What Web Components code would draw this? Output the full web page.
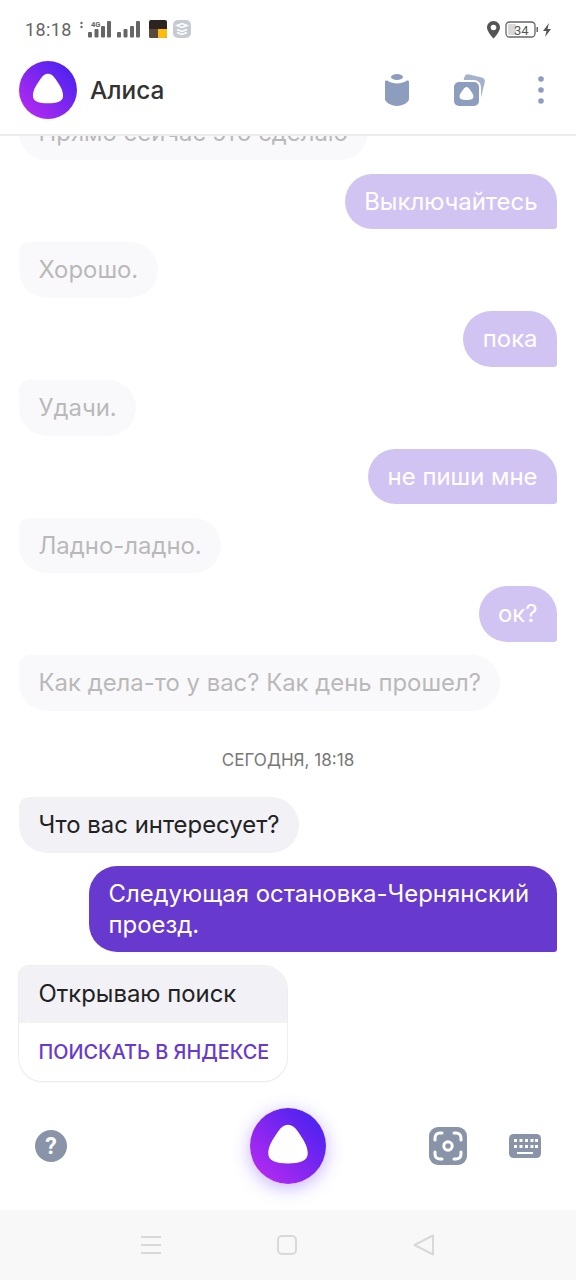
<!DOCTYPE html>
<html lang="ru">
<head>
<meta charset="utf-8">
<style>
  html, body { margin: 0; height: 100%; background: #fff; }
  body { font-family: Inter, "Noto Sans", sans-serif; }
</style>
</head>
<body>
<alice-app>
  <status-bar slot="status"></status-bar>
  <app-header slot="header" title="Алиса"></app-header>
  <chat-list slot="chat">
    <chat-bubble who="alice" faded>Прямо сейчас это сделаю</chat-bubble>
    <chat-bubble who="user" faded>Выключайтесь</chat-bubble>
    <chat-bubble who="alice" faded>Хорошо.</chat-bubble>
    <chat-bubble who="user" faded>пока</chat-bubble>
    <chat-bubble who="alice" faded>Удачи.</chat-bubble>
    <chat-bubble who="user" faded>не пиши мне</chat-bubble>
    <chat-bubble who="alice" faded>Ладно-ладно.</chat-bubble>
    <chat-bubble who="user" faded>ок?</chat-bubble>
    <chat-bubble who="alice" faded>Как дела-то у вас? Как день прошел?</chat-bubble>
    <chat-date>СЕГОДНЯ, 18:18</chat-date>
    <chat-bubble who="alice">Что вас интересует?</chat-bubble>
    <chat-bubble who="user">Следующая остановка-Чернянский проезд.</chat-bubble>
    <search-card action="ПОИСКАТЬ В ЯНДЕКСЕ">Открываю поиск</search-card>
  </chat-list>
  <bottom-bar slot="bottom"></bottom-bar>
  <nav-bar slot="nav"></nav-bar>
</alice-app>

<script>
// the white blob inside the purple circle, drawn in a 100x100 box
const BLOB = "M50 22C55 22 59 25 63 31C69 40 76 49 76 60C76 70 65 73 50 73C35 73 24 70 24 60C24 49 31 40 37 31C41 25 45 22 50 22Z";

function logo(size, id) {
  return `<svg width="${size}" height="${size}" viewBox="0 0 100 100">
    <defs><linearGradient id="${id}" x1="0.1" y1="0.9" x2="0.9" y2="0.1">
      <stop offset="0" stop-color="#b42af0"/><stop offset="1" stop-color="#4a22f0"/>
    </linearGradient></defs>
    <circle cx="50" cy="50" r="50" fill="url(#${id})"/>
    <path d="${BLOB}" fill="#fff"/>
  </svg>`;
}

class AliceApp extends HTMLElement {
  constructor() {
    super();
    this.attachShadow({ mode: "open" }).innerHTML = `
      <style>
        :host { display: flex; flex-direction: column; height: 1280px; width: 576px; overflow: hidden; background: #fff; }
        .chat { flex: 1; min-height: 0; display: flex; flex-direction: column; }
      </style>
      <slot name="status"></slot>
      <slot name="header"></slot>
      <div class="chat"><slot name="chat"></slot></div>
      <slot name="bottom"></slot>
      <slot name="nav"></slot>
    `;
  }
}

class StatusBar extends HTMLElement {
  constructor() {
    super();
    this.attachShadow({ mode: "open" }).innerHTML = `
      <style>
        :host { display: flex; align-items: center; height: 45px; padding: 14px 24px 0 25px; box-sizing: border-box; justify-content: space-between; color: #666; font: 18px Roboto, sans-serif; }
        .side { display: flex; align-items: center; }
        .time { margin-right: 7px; letter-spacing: .4px; }
        svg { display: block; }
      </style>
      <div class="side">
        <span class="time">18:18</span>
        <svg width="114" height="20" viewBox="0 0 114 20">
          <circle cx="2.5" cy="3" r="1.2" fill="#666"/><circle cx="2.5" cy="7" r="1.2" fill="#666"/>
          <text x="12" y="7" font-family="Roboto" font-size="7.5" font-weight="700" fill="#666">4G</text>
          <g fill="#666">
            <rect x="9" y="12" width="4" height="5.500" rx="1"/><rect x="15.500" y="9" width="4" height="8.500" rx="1"/>
            <rect x="22" y="6" width="4" height="11.500" rx="1"/><rect x="28" y="1" width="4" height="16.500" rx="1"/>
            <rect x="38" y="12" width="4" height="5.500" rx="1"/><rect x="44.500" y="9" width="4" height="8.500" rx="1"/>
            <rect x="51" y="6" width="4" height="11.500" rx="1"/><rect x="57" y="1" width="4" height="16.500" rx="1"/>
          </g>
          <rect x="70" y="0" width="18" height="18" rx="2" fill="#2b2420"/>
          <path d="M79 9H88V16C88 17 87 18 86 18H79Z" fill="#fdbb0d"/>
          <path d="M70 9H79V18H72C71 18 70 17 70 16Z" fill="#5a4a3a"/>
          <rect x="94" y="0" width="18" height="18" rx="5" fill="#c6cad3"/>
          <path d="M98 5.500l5-2 5 2-5 2zM98 9.500l5 2 5-2M98 12.500l5 2 5-2" fill="none" stroke="#fff" stroke-width="1.600"/>
        </svg>
      </div>
      <div class="side">
        <svg width="66" height="20" viewBox="0 0 66 20">
          <path d="M7.500 1C3.600 1 1 4 1 7.500C1 12 7.500 18.500 7.500 18.500S14 12 14 7.500C14 4 11.400 1 7.500 1Z" fill="#555"/>
          <circle cx="7.500" cy="7.500" r="2.800" fill="#fff"/>
          <rect x="20" y="2" width="29" height="15" rx="3.500" fill="none" stroke="#666" stroke-width="1.300"/>
          <rect x="22" y="4" width="8" height="11" rx="1" fill="#d8d8d8"/>
          <rect x="50.500" y="7" width="1.500" height="5" fill="#666"/>
          <text x="28" y="14.500" font-family="Roboto" font-size="13" fill="#555">34</text>
          <path d="M63 3L57 11H60.500L59 17L65 9H61.500Z" fill="#555"/>
        </svg>
      </div>
    `;
  }
}

class AppHeader extends HTMLElement {
  constructor() {
    super();
    this.attachShadow({ mode: "open" }).innerHTML = `
      <style>
        :host { display: flex; align-items: center; height: 91px; box-sizing: border-box; padding: 0 32px 0 19px; border-bottom: 2px solid #ececec; background: #fff; color: #333; }
        .title { font-size: 24.400px; font-weight: 500; margin-left: 13px; flex: 1; }
        .icons { display: flex; align-items: center; }
        svg { display: block; }
      </style>
      ${logo(58, "hl")}
      <span class="title">${this.getAttribute("title")}</span>
      <div class="icons">
        <svg width="24" height="33" viewBox="0 0 24 33" fill="#8c9dbd" style="margin-right:45px">
          <ellipse cx="12" cy="4" rx="6" ry="3"/>
          <path d="M0 9C0 7.500 1 7 2.500 7.800C5.500 9.500 8.500 10.500 12 10.500C15.500 10.500 18.500 9.500 21.500 7.800C23 7 24 7.500 24 9V26C24 29 18 33 12 33C6 33 0 29 0 26Z"/>
        </svg>
        <svg width="32" height="33" viewBox="0 0 32 33" style="margin-right:52px">
          <rect x="8" y="2.500" width="21" height="25" rx="4" fill="#a5b2cc" transform="rotate(14 18 15)"/>
          <rect x="-1" y="8" width="27" height="26" rx="6" fill="#8c9dbd" stroke="#fff" stroke-width="2"/>
          <path d="M12.500 14C14 14 15 15.500 16.500 17.500C18 19.500 19.500 21.500 19.500 23.500C19.500 26 17 27 12.500 27C8 27 5.500 26 5.500 23.500C5.500 21.500 7 19.500 8.500 17.500C10 15.500 11 14 12.500 14Z" fill="#fff"/>
        </svg>
        <svg width="6" height="30" viewBox="0 0 6 30" fill="#8c9dbd">
          <circle cx="3" cy="4" r="2.800"/><circle cx="3" cy="15" r="2.800"/><circle cx="3" cy="26" r="2.800"/>
        </svg>
      </div>
    `;
  }
}

class ChatList extends HTMLElement {
  constructor() {
    super();
    this.attachShadow({ mode: "open" }).innerHTML = `
      <style>
        :host { display: flex; flex-direction: column; justify-content: flex-end; flex: 1; min-height: 0; overflow: hidden; padding: 0 19px 4px; gap: 13.2px; }
        ::slotted(*) { flex: none; }
      </style>
      <slot></slot>
    `;
  }
}

class ChatBubble extends HTMLElement {
  constructor() {
    super();
    this.attachShadow({ mode: "open" }).innerHTML = `
      <style>
        :host { display: block; align-self: flex-start; max-width: 500px; box-sizing: border-box; padding: 12px 19.500px 11px; min-height: 55.600px; font-size: 23.900px; line-height: 31.500px; border-radius: 10px 28px 28px 28px; background: #f1f1f6; color: #222; }
        :host([who="user"]) { align-self: flex-end; max-width: 468px; background: #6839cf; color: #fff; border-radius: 28px 28px 3px 28px; }
        :host([faded]) { background: #f9f9fb; color: #b9b9b9; }
        :host([faded][who="user"]) { background: #d2c4f2; color: #fff; }
      </style>
      <slot></slot>
    `;
  }
}

class ChatDate extends HTMLElement {
  constructor() {
    super();
    this.attachShadow({ mode: "open" }).innerHTML = `
      <style>
        :host { display: block; text-align: center; color: #777; font-size: 17.100px; line-height: 24px; margin: 24px 0 12px; }
      </style>
      <slot></slot>
    `;
  }
}

class SearchCard extends HTMLElement {
  constructor() {
    super();
    this.attachShadow({ mode: "open" }).innerHTML = `
      <style>
        :host { display: block; align-self: flex-start; width: 268px; margin-top: 1px; box-sizing: border-box; border-radius: 10px 24px 24px 24px; overflow: hidden; box-shadow: 0 0 0 1px #eee, 0 1px 2px #e4e4e4; font-size: 23.900px; }
        .text { background: #f1f1f6; color: #222; height: 57px; padding: 12px 19.500px 0; box-sizing: border-box; line-height: 32px; }
        .action { background: #fff; color: #6839cf; height: 58px; padding: 0 19.500px; display: flex; align-items: center; font-size: 19.850px; font-weight: 500; white-space: nowrap; }
      </style>
      <div class="text"><slot></slot></div>
      <div class="action">${this.getAttribute("action")}</div>
    `;
  }
}

class BottomBar extends HTMLElement {
  constructor() {
    super();
    this.attachShadow({ mode: "open" }).innerHTML = `
      <style>
        :host { display: grid; grid-template-columns: 1fr auto 1fr; align-items: center; height: 125px; flex: none; padding: 0 35px 4px; box-sizing: border-box; background: #fff; }
        .main { border-radius: 50%; box-shadow: 0 4px 18px rgba(90,40,240,.35); line-height: 0; }
        .right { display: flex; justify-content: flex-end; align-items: center; gap: 42px; }
        svg { display: block; }
      </style>
      <svg width="32" height="32" viewBox="0 0 32 32">
        <circle cx="16" cy="16" r="16" fill="#8a94a8"/>
        <text x="16" y="24" text-anchor="middle" font-family="Roboto" font-weight="700" font-size="23" fill="#fff">?</text>
      </svg>
      <div class="main">${logo(76, "ml")}</div>
      <div class="right">
        <svg width="38" height="38" viewBox="0 0 38 38">
          <rect width="38" height="38" rx="9" fill="#8a94a8"/>
          <g fill="none" stroke="#fff" stroke-width="3" stroke-linecap="round">
            <path d="M6 13V11C6 8 8 6 11 6H13M25 6H27C30 6 32 8 32 11V13M32 25V27C32 30 30 32 27 32H25M13 32H11C8 32 6 30 6 27V25"/>
          </g>
          <circle cx="19" cy="19" r="4.200" fill="none" stroke="#fff" stroke-width="3"/>
        </svg>
        <svg width="32" height="24" viewBox="0 0 32 24">
          <rect width="32" height="24" rx="4.500" fill="#8a94a8"/>
          <g fill="#fff">
            <rect x="5" y="5" width="3" height="3"/><rect x="10.500" y="5" width="3" height="3"/><rect x="16" y="5" width="3" height="3"/><rect x="21.500" y="5" width="3" height="3"/><rect x="26" y="5" width="3" height="3"/>
            <rect x="5" y="11" width="3" height="3"/><rect x="10.500" y="11" width="3" height="3"/><rect x="16" y="11" width="3" height="3"/><rect x="21.500" y="11" width="3" height="3"/><rect x="26" y="11" width="3" height="3"/>
            <rect x="8" y="18" width="16" height="2"/>
          </g>
        </svg>
      </div>
    `;
  }
}

class NavBar extends HTMLElement {
  constructor() {
    super();
    this.attachShadow({ mode: "open" }).innerHTML = `
      <style>
        :host { display: flex; align-items: center; justify-content: space-between; height: 70px; flex: none; padding: 0 141px; box-sizing: border-box; background: #f8f8f8; }
        svg { display: block; }
      </style>
      <svg width="20" height="20" viewBox="0 0 20 20" stroke="#d9d9d9" stroke-width="2"><path d="M0 2H20M0 10H20M0 18H20"/></svg>
      <svg width="20" height="20" viewBox="0 0 20 20" fill="none" stroke="#d9d9d9" stroke-width="2"><rect x="1" y="1" width="18" height="18" rx="4"/></svg>
      <svg width="22" height="22" viewBox="0 0 22 22" fill="none" stroke="#d9d9d9" stroke-width="2" stroke-linejoin="round"><path d="M20 1.500V20.500L1.500 11Z"/></svg>
    `;
  }
}

customElements.define("alice-app", AliceApp);
customElements.define("status-bar", StatusBar);
customElements.define("app-header", AppHeader);
customElements.define("chat-list", ChatList);
customElements.define("chat-bubble", ChatBubble);
customElements.define("chat-date", ChatDate);
customElements.define("search-card", SearchCard);
customElements.define("bottom-bar", BottomBar);
customElements.define("nav-bar", NavBar);
</script>
</body>
</html>
